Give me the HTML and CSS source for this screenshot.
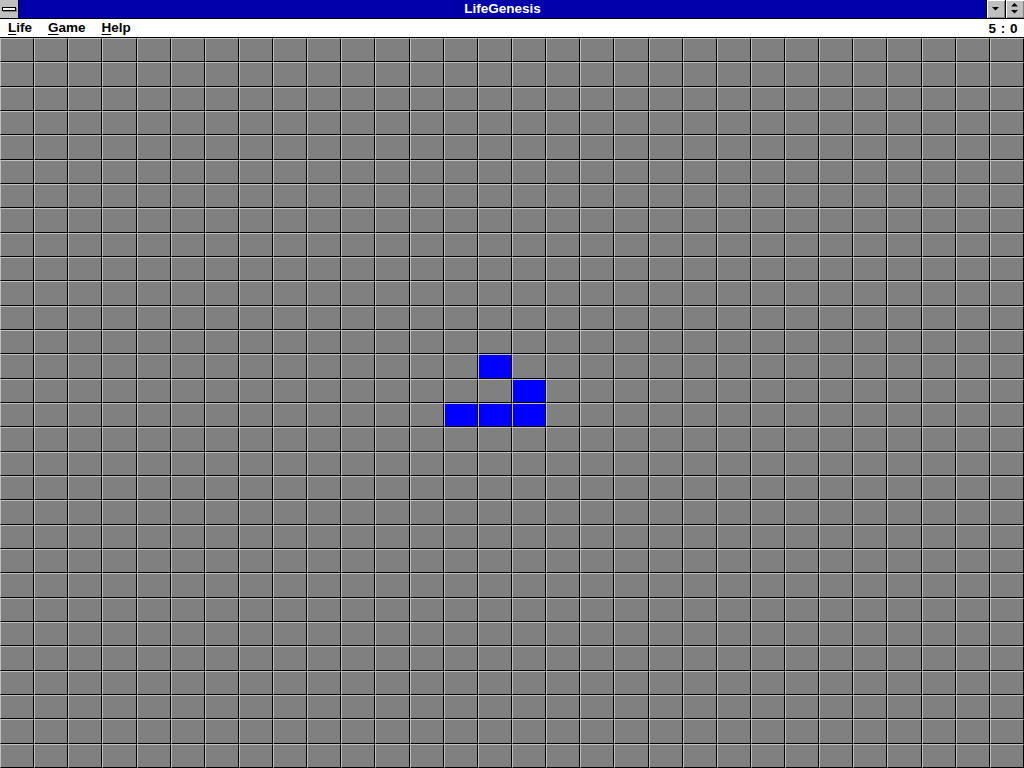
FILE: index.html
```html
<!DOCTYPE html>
<html>
<head>
<meta charset="utf-8">
<title>LifeGenesis</title>
<link rel="stylesheet" href="styles.css">
</head>
<body>
<div class="window">
  <div class="titlebar">
    <div class="sysmenu"><span class="sysbar"></span></div>
    <div class="title">LifeGenesis</div>
    <div class="btn">
      <svg width="18" height="18" viewBox="0 0 18 18"><polygon points="5,7 12,7 8.5,10.5" fill="#000"/></svg>
    </div>
    <div class="btn">
      <svg width="18" height="18" viewBox="0 0 18 18"><polygon points="8.5,3 12,6.5 5,6.5" fill="#000"/><polygon points="5,10 12,10 8.5,13.5" fill="#000"/></svg>
    </div>
  </div>
  <div class="menubar">
    <span class="item"><u>L</u>ife</span>
    <span class="item"><u>G</u>ame</span>
    <span class="item"><u>H</u>elp</span>
    <span class="score">5 : 0</span>
  </div>
  <div class="board" id="board"></div>
</div>
<script src="script.js"></script>
</body>
</html>
```

FILE: styles.css
```css
html, body {
  margin: 0;
  padding: 0;
  width: 1024px;
  height: 768px;
  overflow: hidden;
  background: #808080;
  font-family: "Liberation Sans", Arial, sans-serif;
}

.window {
  display: flex;
  flex-direction: column;
  width: 1024px;
  height: 768px;
}

.titlebar {
  display: flex;
  height: 18px;
  background: #0000aa;
  border-bottom: 1px solid #000;
}

.sysmenu {
  width: 18px;
  background: #c0c0c0;
  border-right: 1px solid #000;
  display: flex;
  align-items: center;
  justify-content: center;
}

.sysbar {
  display: block;
  width: 12px;
  height: 2px;
  background: #fff;
  border: 1px solid #000;
  box-shadow: 1px 1px 0 #808080;
  margin-top: -1px;
  margin-left: -1px;
}

.title {
  flex: 1;
  color: #fff;
  font-weight: bold;
  font-size: 13.5px;
  line-height: 18px;
  text-align: center;
}

.btn {
  width: 18px;
  height: 18px;
  background: #c0c0c0;
  border-left: 1px solid #000;
  box-shadow: inset 1px 1px 0 #fff, inset -1px -1px 0 #808080;
}

.btn svg {
  display: block;
}

.menubar {
  display: flex;
  align-items: center;
  height: 18px;
  background: #fff;
  border-bottom: 1px solid #000;
  font-size: 13.5px;
  font-weight: bold;
  color: #000;
  padding-left: 8px;
}

.item {
  margin-right: 16px;
  line-height: 18px;
}

.item u {
  text-decoration-thickness: 1px;
  text-underline-offset: 2px;
}

.score {
  margin-left: auto;
  margin-right: 6px;
  letter-spacing: 0.5px;
}

.board {
  flex: 1;
  display: grid;
  grid-template-columns: repeat(30, 1fr);
  grid-template-rows: repeat(30, 1fr);
  background: #808080;
}

.cell {
  background: #808080;
  border-top: 1px solid #c0c0c0;
  border-left: 1px solid #c0c0c0;
  border-right: 1px solid #000;
  border-bottom: 1px solid #000;
}

.cell.on {
  background: #0000ff;
}
```

FILE: script.js
```js
(function () {
  var board = document.getElementById('board');
  var alive = { '13,14': 1, '14,15': 1, '15,13': 1, '15,14': 1, '15,15': 1 };
  var frag = document.createDocumentFragment();
  for (var r = 0; r < 30; r++) {
    for (var c = 0; c < 30; c++) {
      var d = document.createElement('div');
      d.className = alive[r + ',' + c] ? 'cell on' : 'cell';
      frag.appendChild(d);
    }
  }
  board.appendChild(frag);
})();
```
